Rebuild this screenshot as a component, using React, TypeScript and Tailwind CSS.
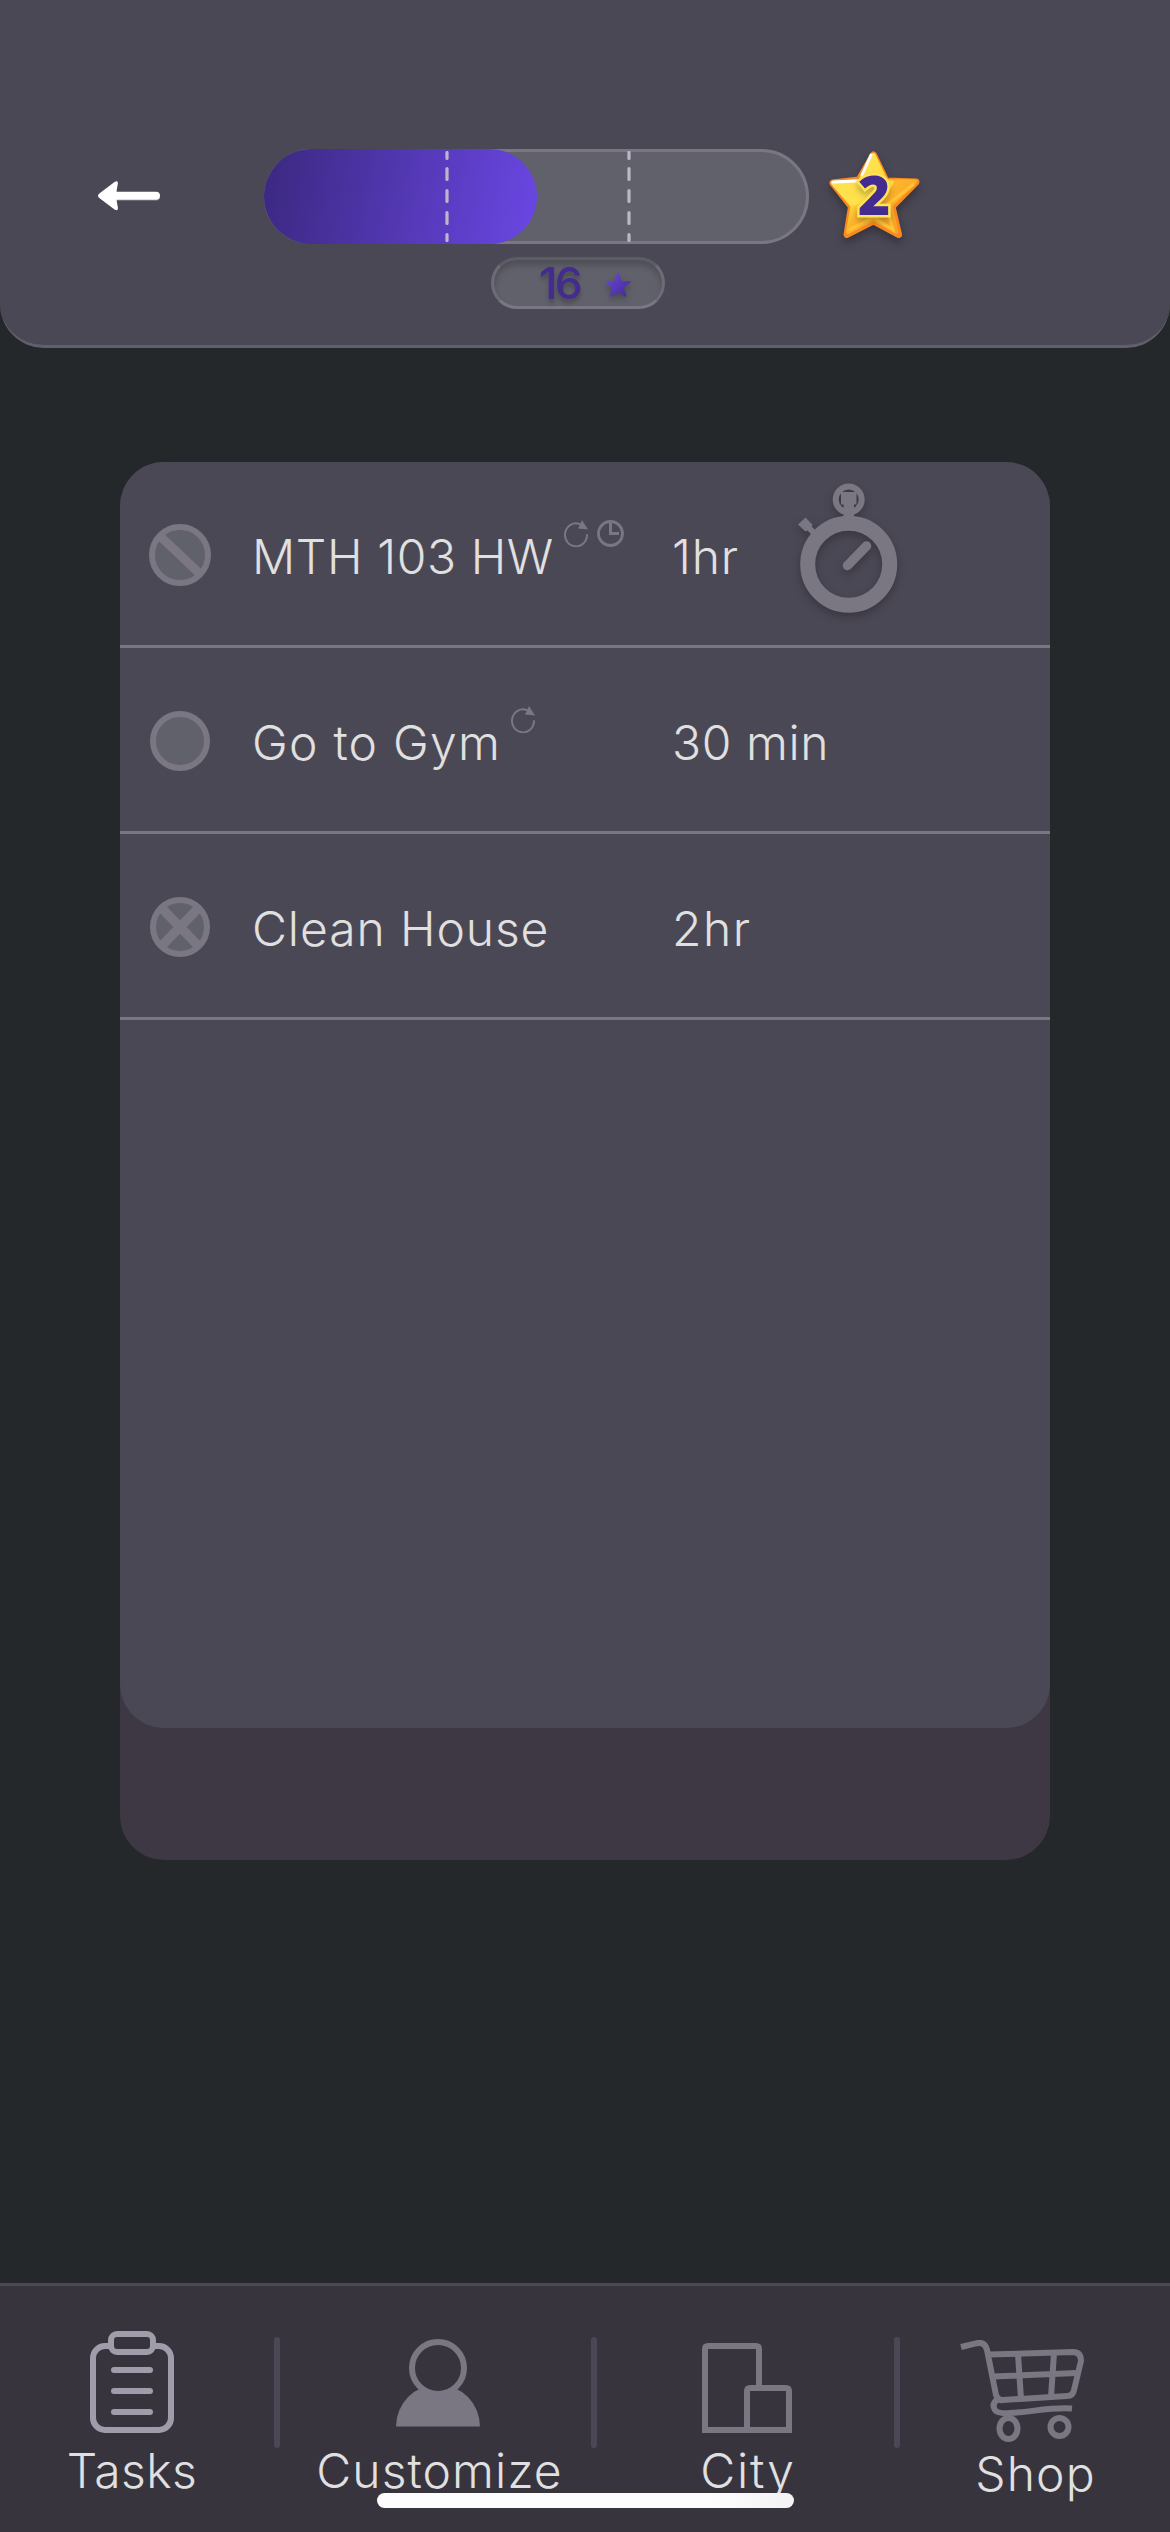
import { FC, ReactNode } from 'react';
import clsx from 'clsx';

type TaskStatus = 'blocked' | 'open' | 'failed';

interface ITask {
  name: string;
  duration: string;
  status: TaskStatus;
  tracking: string;
  durationTracking: string;
  repeats?: boolean;
  scheduled?: boolean;
  hasTimer?: boolean;
}

const tasks: ITask[] = [
  {
    name: 'MTH 103 HW',
    duration: '1hr',
    status: 'blocked',
    tracking: 'tracking-[0.6px]',
    durationTracking: 'tracking-[0.8px]',
    repeats: true,
    scheduled: true,
    hasTimer: true,
  },
  {
    name: 'Go to Gym',
    duration: '30 min',
    status: 'open',
    tracking: 'tracking-[1.25px]',
    durationTracking: 'tracking-[0.6px]',
    repeats: true,
  },
  {
    name: 'Clean House',
    duration: '2hr',
    status: 'failed',
    tracking: 'tracking-[0.9px]',
    durationTracking: 'tracking-[1.5px]',
  },
];

const BackArrow: FC = () => (
  <svg width="62" height="30" viewBox="0 0 62 30" className="mb-[2px] shrink-0">
    <path d="M16 15.800H58" stroke="#7a7682" strokeWidth="8" strokeLinecap="round" />
    <path d="M16 14.800H58" stroke="#fff" strokeWidth="8" strokeLinecap="round" />
    <path
      d="M1 12.800L16.500 1Q20.500-1 19.800 3Q17 14.500 19.800 26Q20.500 31 16.500 28.500L1 16.800Q-1 14.800 1 12.800Z"
      fill="#fff"
    />
  </svg>
);

const DashedMark: FC<{ left: string }> = ({ left }) => (
  <svg
    width="4"
    height="91"
    viewBox="0 0 4 91"
    className={clsx('absolute -top-px', left)}
  >
    <path
      d="M2 1.500V7.500M2 17.500V28.500M2 39.500V50.500M2 61.500V72.500M2 83.500V89.500"
      stroke="#bdb6c6"
      strokeWidth="3.200"
      strokeLinecap="round"
    />
  </svg>
);

const LevelStar: FC = () => (
  <div className="relative ml-5 h-[91px] w-[91px] shrink-0">
    <svg
      width="91"
      height="88"
      viewBox="0 0 91 88"
      className="overflow-visible drop-shadow-[0_5px_4px_rgba(0,0,0,0.3)]"
    >
      <defs>
        <linearGradient id="starBase" x1="0" y1="0" x2="1" y2="1">
          <stop offset="0" stopColor="#fff08a" />
          <stop offset="0.42" stopColor="#ffdc3c" />
          <stop offset="0.55" stopColor="#fdb52c" />
          <stop offset="1" stopColor="#fb9a26" />
        </linearGradient>
      </defs>
      <path
        d="M44.500 4L57 30L87 31L63 55.500L69.500 83.500L44.500 70L18 83.500L22.500 55.500L4 32L30 29Z"
        fill="#f98a22"
        stroke="#f98a22"
        strokeWidth="7"
        strokeLinejoin="round"
      />
      <path
        d="M44.500 4L57 30L86 30.500L61.500 54.500L67.500 81L44.500 68L19 81L23.500 55L4 32L31 30Z"
        fill="url(#starBase)"
        stroke="url(#starBase)"
        strokeWidth="4"
        strokeLinejoin="round"
      />
      <path
        d="M85 33L57 54.500L64 79L44.500 66L20 79"
        fill="none"
        stroke="#fec534"
        strokeWidth="3"
      />
      <path d="M45 3L54 29L65 30Q60 50 22 55L4 33L32 31Z" fill="#ffe14c" />
      <path
        d="M42 4L33 24M4 31L28 30"
        stroke="#fff"
        strokeWidth="3"
        strokeLinecap="round"
      />
    </svg>
    <span
      className="absolute top-[13px] left-[29px] font-['Noto_Sans',sans-serif] text-[55px] leading-[60px] font-black text-[#432b8f]
        [-webkit-text-stroke:5px_#ffe25a] [paint-order:stroke_fill] drop-shadow-[0_4px_3px_rgba(0,0,0,0.25)]"
    >
      2
    </span>
  </div>
);

const StatusCircle: FC<{ status: TaskStatus }> = ({ status }) => (
  <svg
    width="62"
    height="62"
    viewBox="0 0 62 62"
    className="mt-[3px] shrink-0"
    fill="none"
    stroke="#7a7682"
  >
    <circle
      cx="31"
      cy="31"
      r={status === 'blocked' ? 28 : 27}
      fill="#61616b"
      strokeWidth="6"
    />
    {status === 'blocked' && <path d="M12 13L50 49" strokeWidth="9" />}
    {status === 'failed' && (
      <path d="M12.500 12L49.500 50M49.500 12L12.500 50" strokeWidth="9.500" />
    )}
  </svg>
);

const RepeatIcon: FC = () => (
  <svg width="24" height="27" viewBox="0 0 24 27" className="shrink-0">
    <path
      d="M23 15A11 11.500 0 1 1 15.500 4"
      fill="none"
      stroke="#7a7682"
      strokeWidth="2"
      strokeLinecap="round"
    />
    <path d="M18 0L24 9.500L14 8.500Z" fill="#7a7682" />
  </svg>
);

const ClockIcon: FC = () => (
  <svg
    width="27"
    height="27"
    viewBox="0 0 27 27"
    className="ml-[9px] shrink-0"
    fill="none"
    stroke="#7a7682"
  >
    <circle cx="13.500" cy="13.500" r="12" strokeWidth="2.800" />
    <path d="M13.500 2V13.500H22" strokeWidth="3" />
  </svg>
);

const StopwatchIcon: FC = () => (
  <svg
    width="104"
    height="132"
    viewBox="0 0 104 132"
    className="mb-[10px] overflow-visible drop-shadow-[0_4px_4px_rgba(0,0,0,0.25)]"
    fill="none"
    stroke="#7a7682"
  >
    <circle cx="50.700" cy="81.200" r="41" strokeWidth="15" />
    <circle cx="50.700" cy="16.500" r="13" strokeWidth="6" />
    <path
      d="M43 9H58.500V21.500H56V36H45.500V21.500H43ZM7.500 34.500L14.800 42L13.500 43.200L21 51L17 55L9.500 47.500L7.500 48.500L0 41.500Z"
      fill="#7a7682"
      stroke="none"
    />
    <path d="M49.500 82.500L68.500 63" strokeWidth="9.500" strokeLinecap="round" />
  </svg>
);

const TaskRow: FC<{ task: ITask }> = ({ task }) => (
  <li className="flex h-[186px] items-center border-b-[3px] border-[#7a7682] pl-[29px] text-[48px] leading-[48px] font-light">
    <StatusCircle status={task.status} />
    <div className="ml-[41px] flex w-[420px] items-start pt-[6px]">
      <span className={clsx('whitespace-pre', task.tracking)}>{task.name}</span>
      <span className="-mt-[13px] ml-[10px] flex">
        {task.repeats && <RepeatIcon />}
        {task.scheduled && <ClockIcon />}
      </span>
    </div>
    <span
      className={clsx(
        'w-[126px] pt-[6px] whitespace-pre',
        task.durationTracking,
      )}
    >
      {task.duration}
    </span>
    {task.hasTimer && <StopwatchIcon />}
  </li>
);

const TasksIcon: FC = () => (
  <svg
    width="84"
    height="102"
    viewBox="0 0 84 102"
    fill="none"
    stroke="#a09dab"
    strokeWidth="6"
    strokeLinecap="round"
  >
    <path d="M20 15H15A12 12 0 0 0 3 27V87A12 12 0 0 0 15 99H69A12 12 0 0 0 81 87V27A12 12 0 0 0 69 15H64" />
    <rect x="21" y="3" width="42" height="18" rx="6" />
    <path d="M24 39H60M24 60H60M24 81H60" />
  </svg>
);

const CustomizeIcon: FC = () => (
  <svg width="84" height="88" viewBox="0 0 84 88" stroke="#7a7682">
    <path d="M0 87.500A42 42 0 0 1 84 87.500Z" fill="#7a7682" stroke="none" />
    <circle cx="42" cy="29" r="26" strokeWidth="6" fill="#37343e" />
  </svg>
);

const CityIcon: FC = () => (
  <svg
    width="90"
    height="90"
    viewBox="0 0 90 90"
    fill="none"
    stroke="#7a7682"
    strokeWidth="6"
  >
    <path d="M57 43V6Q57 3 54 3H6Q3 3 3 6V87H45" />
    <path d="M45 87V48Q45 45 48 45H84Q87 45 87 48V87Z" />
  </svg>
);

const ShopIcon: FC = () => (
  <svg
    width="124"
    height="102"
    viewBox="0 0 124 102"
    fill="none"
    stroke="#7a7682"
    strokeWidth="6"
  >
    <path d="M1 7L17 3.200Q25 1.500 27 10L36 55Q38 61 43 60L107 56Q113 56 114 50L121 21Q121 12 113 12L29 14.500" />
    <path d="M33 36.500L117 33M58 14L61 59M94 13L91 57M38 59Q31 64 35 70Q38 74 50 73C72 72 90 67 112 68.500" />
    <ellipse cx="48.500" cy="88.500" rx="9" ry="10.500" />
    <ellipse cx="99.500" cy="87" rx="9" ry="9" />
  </svg>
);

interface NavItemProps {
  label: string;
  className: string;
  labelClassName: string;
  children: ReactNode;
}

const NavItem: FC<NavItemProps> = ({
  label,
  className,
  labelClassName,
  children,
}) => (
  <div className={clsx('flex shrink-0 flex-col items-center', className)}>
    <div className="flex h-[114px] items-end">{children}</div>
    <span
      className={clsx(
        'text-[48px] leading-[48px] font-light whitespace-pre',
        labelClassName,
      )}
    >
      {label}
    </span>
  </div>
);

const NavDivider: FC<{ className: string }> = ({ className }) => (
  <div
    className={clsx(
      'mt-[18px] h-[111px] w-[6px] shrink-0 rounded-full bg-[#4b4855]',
      className,
    )}
  />
);

const Header: FC = () => (
  <header className="h-[348px] rounded-b-[44px] border-b-[3px] border-[#61606a] bg-[#4b4855] pt-[149px]">
    <div className="flex h-[95px] items-center pl-[98px]">
      <BackArrow />
      <div className="relative ml-[104px] h-[95px] w-[545px] rounded-full border-[3px] border-[#7a7682] bg-[#61616b]">
        <div className="-m-[3px] h-[95px] w-[273px] rounded-full bg-linear-[100deg] from-[#3b2880] to-[#6a47e4]" />
        <DashedMark left="left-[178px]" />
        <DashedMark left="left-[360px]" />
      </div>
      <LevelStar />
    </div>
    <div
      className="mt-[13px] ml-[491px] flex h-[52px] w-[174px] items-center rounded-full border-[3px] border-[#7a7682] border-t-[#5d5b64]
        border-x-[#6e6b76] bg-[#61616b] pl-[45px] shadow-[inset_0_5px_6px_rgba(0,0,0,0.2)]"
    >
      <span className="text-[44px] leading-[44px] font-medium tracking-[-2.5px] text-[#432b8f] [text-shadow:0_4px_4px_rgba(0,0,0,0.25)]">
        16
      </span>
      <svg
        width="26"
        height="25"
        viewBox="0 0 26 25"
        className="mt-[2px] ml-[25px] overflow-visible drop-shadow-[0_4px_3px_rgba(0,0,0,0.25)]"
      >
        <defs>
          <linearGradient id="pointStar" x1="0" y1="0" x2="1" y2="1">
            <stop offset="0" stopColor="#6a47e4" />
            <stop offset="1" stopColor="#432b8f" />
          </linearGradient>
        </defs>
        <path
          d="M13 1L16 9.500L25 10L18 15.500L20.500 24L13 19.500L5.500 24L8 15.500L1 10L10 9.500Z"
          fill="url(#pointStar)"
          stroke="url(#pointStar)"
          strokeWidth="1.500"
          strokeLinejoin="round"
        />
      </svg>
    </div>
  </header>
);

const App: FC = () => {
  return (
    <div className="flex h-[2532px] w-[1170px] flex-col overflow-hidden bg-[#24282a] font-['Inter',sans-serif] text-[#e0e0e0]">
      <Header />

      <main className="mx-[120px] mt-[114px] h-[1398px] rounded-[44px] bg-[#3d3843]">
        <ul className="h-[1266px] rounded-[44px] bg-[#4b4855]">
          {tasks.map((task) => (
            <TaskRow key={task.name} task={task} />
          ))}
        </ul>
      </main>

      <nav className="relative mt-auto flex h-[249px] items-start border-t-[3px] border-[#4b4855] bg-[#37343e] pt-[33px]">
        <NavItem
          label="Tasks"
          className="w-[264px]"
          labelClassName="mt-[14px] tracking-[0.4px]"
        >
          <TasksIcon />
        </NavItem>
        <NavDivider className="ml-[10px]" />
        <NavItem
          label="Customize"
          className="-mt-[6px] w-[316px]"
          labelClassName="mt-[20px] pl-[3px] tracking-[1.1px]"
        >
          <CustomizeIcon />
        </NavItem>
        <NavDivider className="-ml-[5px]" />
        <NavItem
          label="City"
          className="w-[300px]"
          labelClassName="mt-[14px] pl-[2px] tracking-[1.8px]"
        >
          <CityIcon />
        </NavItem>
        <NavDivider className="-ml-[3px]" />
        <NavItem
          label="Shop"
          className="mt-[9px] w-[244px]"
          labelClassName="mt-[8px] pl-[27px] tracking-[1.2px]"
        >
          <ShopIcon />
        </NavItem>
        <div className="absolute bottom-[24px] left-[377px] h-[15px] w-[417px] rounded-full bg-linear-to-r from-[#fdfdfd] from-80% to-[#f3f3f3]" />
      </nav>
    </div>
  );
};

export default App;
